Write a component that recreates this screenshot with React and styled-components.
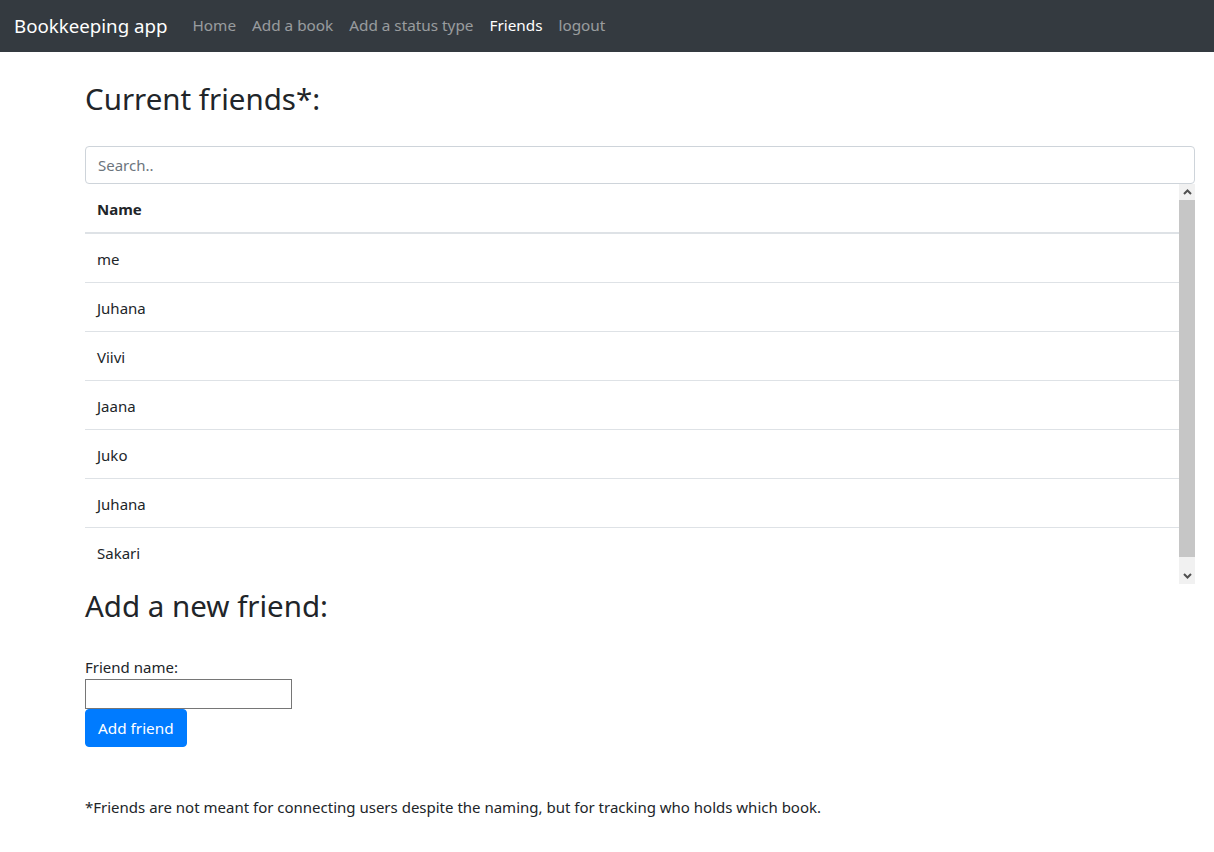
import React from "react";
import styled, { createGlobalStyle } from "styled-components";

const Global = createGlobalStyle`
  html, body { margin: 0; padding: 0; background: #fff; }
  body {
    font-family: "Noto Sans", "Open Sans", sans-serif;
    font-size: 15px;
    line-height: 1.5;
    color: #212529;
  }
  * { box-sizing: border-box; }
`;

const Navbar = styled.nav`
  height: 52px;
  background: #343a40;
  display: flex;
  align-items: center;
  padding: 0 14px 1px;
`;

const Brand = styled.a`
  font-size: 18.7px;
  color: #fff;
  margin-right: 17px;
  text-decoration: none;
  line-height: 30px;
`;

const NavLink = styled.a`
  font-size: 15.3px;
  padding: 8px;
  text-decoration: none;
  color: ${(p) => (p.$active ? "#fff" : "rgba(255,255,255,0.5)")};
`;

const Main = styled.main`
  margin-left: 85px;
  width: 1110px;
  display: flex;
  flex-direction: column;
`;

const Heading = styled.h2`
  font-size: 29.5px;
  font-weight: 400;
  line-height: 38px;
  margin: ${(p) => p.$margin};
`;

const Search = styled.input`
  display: block;
  width: 100%;
  height: 38px;
  padding: 6px 12px;
  font-family: inherit;
  font-size: 15px;
  color: #495057;
  border: 1px solid #ced4da;
  border-radius: 4px;
  outline: none;
  &::placeholder { color: #6c757d; }
`;

const ScrollArea = styled.div`
  display: flex;
  height: 400px;
`;

const Viewport = styled.div`
  flex: 1;
  overflow: hidden;
`;

const ScrollBar = styled.div`
  width: 16px;
  display: flex;
  flex-direction: column;
  background: #f1f1f1;
`;

const ScrollButton = styled.div`
  height: 16px;
  display: flex;
  align-items: center;
  justify-content: center;
`;

const Track = styled.div`
  flex: 1;
  display: flex;
  flex-direction: column;
`;

const Thumb = styled.div`
  height: 357px;
  background: #c6c6c6;
`;

const Table = styled.table`
  width: 100%;
  border-collapse: collapse;
`;

const Th = styled.th`
  text-align: left;
  font-weight: 700;
  padding: 13px 12px 11px;
  line-height: 24px;
  border-bottom: 2px solid #dee2e6;
`;

const Td = styled.td`
  padding: 13px 12px 11px;
  line-height: 24px;
  border-top: ${(p) => (p.$first ? "none" : "1px solid #dee2e6")};
`;

const Label = styled.label`
  display: block;
  line-height: 20px;
  padding-bottom: 2px;
`;

const NameInput = styled.input`
  display: block;
  width: 207px;
  height: 30px;
  border: 1px solid #767676;
  border-radius: 0;
  font-family: inherit;
  font-size: 15px;
  padding: 2px 4px;
  outline: none;
`;

const Button = styled.button`
  align-self: flex-start;
  background: #007bff;
  color: #fff;
  border: 1px solid #007bff;
  border-radius: 4px;
  font-family: inherit;
  font-size: 15.3px;
  line-height: 24px;
  padding: 6px 12px;
  cursor: pointer;
`;

const Note = styled.p`
  margin: 48px 0 0;
  line-height: 24px;
`;

const Chevron = ({ up }) => (
  <svg width="9" height="6" viewBox="0 0 9 6">
    <path
      d={up ? "M1 5 L4.5 1.5 L8 5" : "M1 1 L4.5 4.5 L8 1"}
      fill="none"
      stroke="#505050"
      strokeWidth="2"
    />
  </svg>
);

const friends = ["me", "Juhana", "Viivi", "Jaana", "Juko", "Juhana", "Sakari"];

export default function App() {
  return (
    <>
      <Global />
      <Navbar>
        <Brand href="#">Bookkeeping app</Brand>
        <NavLink href="#">Home</NavLink>
        <NavLink href="#">Add a book</NavLink>
        <NavLink href="#">Add a status type</NavLink>
        <NavLink href="#" $active>Friends</NavLink>
        <NavLink href="#">logout</NavLink>
      </Navbar>
      <Main>
        <Heading $margin="28px 0 28px">Current friends*:</Heading>
        <Search placeholder="Search.." />
        <ScrollArea>
          <Viewport>
            <Table>
              <thead>
                <tr><Th>Name</Th></tr>
              </thead>
              <tbody>
                {friends.map((f, i) => (
                  <tr key={i}><Td $first={i === 0}>{f}</Td></tr>
                ))}
              </tbody>
            </Table>
          </Viewport>
          <ScrollBar>
            <ScrollButton><Chevron up /></ScrollButton>
            <Track><Thumb /></Track>
            <ScrollButton><Chevron /></ScrollButton>
          </ScrollBar>
        </ScrollArea>
        <Heading $margin="3px 0 32px">Add a new friend:</Heading>
        <Label>Friend name:</Label>
        <NameInput />
        <Button>Add friend</Button>
        <Note>*Friends are not meant for connecting users despite the naming, but for tracking who holds which book.</Note>
      </Main>
    </>
  );
}
